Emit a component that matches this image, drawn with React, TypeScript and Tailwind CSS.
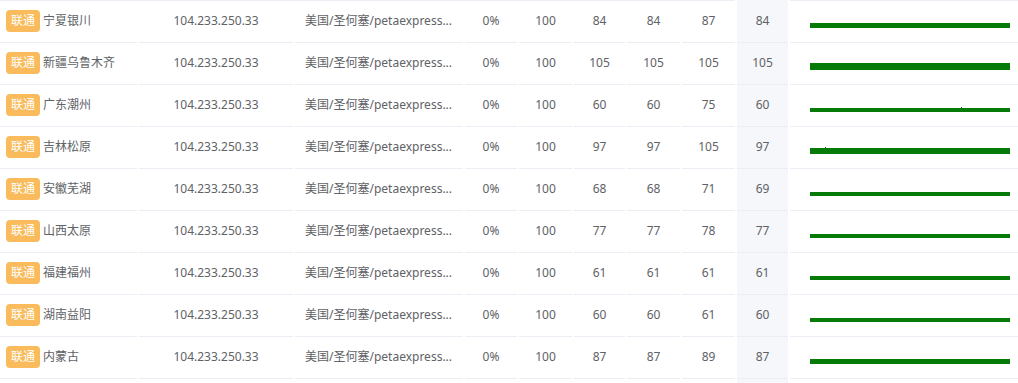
import React from "react";

const rows = [
  { city: "宁夏银川", min: 84, avg: 84, max: 87, last: 84, bar: 5, tick: null as number | null },
  { city: "新疆乌鲁木齐", min: 105, avg: 105, max: 105, last: 105, bar: 7, tick: null },
  { city: "广东潮州", min: 60, avg: 60, max: 75, last: 60, bar: 4, tick: 151 },
  { city: "吉林松原", min: 97, avg: 97, max: 105, last: 97, bar: 6, tick: 15 },
  { city: "安徽芜湖", min: 68, avg: 68, max: 71, last: 69, bar: 4, tick: null },
  { city: "山西太原", min: 77, avg: 77, max: 78, last: 77, bar: 4, tick: null },
  { city: "福建福州", min: 61, avg: 61, max: 61, last: 61, bar: 4, tick: null },
  { city: "湖南益阳", min: 60, avg: 60, max: 61, last: 60, bar: 4, tick: null },
  { city: "内蒙古", min: 87, avg: 87, max: 89, last: 87, bar: 5, tick: null },
];

const cell = "h-[42px] border-b border-[#ebeef5] flex items-center shrink-0";

const Sparkline = ({ h, tick }: { h: number; tick: number | null }) => (
  <svg width="200" height="10" viewBox="0 0 200 10" className="block">
    <rect x="0" y={10 - h} width="200" height={h} fill="#077b07" />
    {tick !== null && <rect x={tick} y={10 - h - 1} width="1" height="1" fill="#077b07" />}
  </svg>
);

const App = () => {
  return (
    <div
      className="w-[1018px] h-[383px] overflow-hidden bg-white text-[12px] text-[#606266]"
      style={{ fontFamily: '"Noto Sans", "Noto Sans CJK SC", sans-serif' }}
    >
      <div className="h-px flex gap-[2px]">
        <div className="w-[735px] bg-[#ebeef5]" />
        <div className="w-[51px] bg-[#f5f7fa]" />
        <div className="w-[228px] bg-[#ebeef5]" />
      </div>
      {rows.map((r, i) => (
        <div key={i} className="flex gap-[2px]">
          <div className={`${cell} w-[137px] pl-[6px] pb-[2px] gap-[3px]`}>
            <span className="h-[22px] px-[5px] rounded-[4px] bg-[#f9bb5b] text-white flex items-center leading-none">
              联通
            </span>
            <span>{r.city}</span>
          </div>
          <div className={`${cell} w-[154px] pb-[2px] justify-center`}>104.233.250.33</div>
          <div className={`${cell} w-[168px] pb-[2px] px-[10px] whitespace-nowrap`}>
            美国/圣何塞/petaexpress...
          </div>
          <div className={`${cell} w-[52px] pb-[2px] justify-center`}>0%</div>
          <div className={`${cell} w-[53px] pb-[2px] justify-center`}>100</div>
          <div className={`${cell} w-[51px] pb-[2px] justify-center`}>{r.min}</div>
          <div className={`${cell} w-[53px] pb-[2px] justify-center`}>{r.avg}</div>
          <div className={`${cell} w-[53px] pb-[2px] justify-center`}>{r.max}</div>
          <div className={`${cell} w-[51px] pb-[2px] justify-center bg-[#f5f7fa]`}>{r.last}</div>
          <div className={`${cell} w-[228px] pl-[20px] items-start pt-[17px]`}>
            <Sparkline h={r.bar} tick={r.tick} />
          </div>
        </div>
      ))}
      {/* next row, only its top edge is in view */}
      <div className="flex gap-[2px]">
        <div className={`${cell} w-[735px]`} />
        <div className={`${cell} w-[51px] bg-[#f5f7fa]`} />
        <div className={`${cell} w-[228px]`} />
      </div>
    </div>
  );
};

export default App;
